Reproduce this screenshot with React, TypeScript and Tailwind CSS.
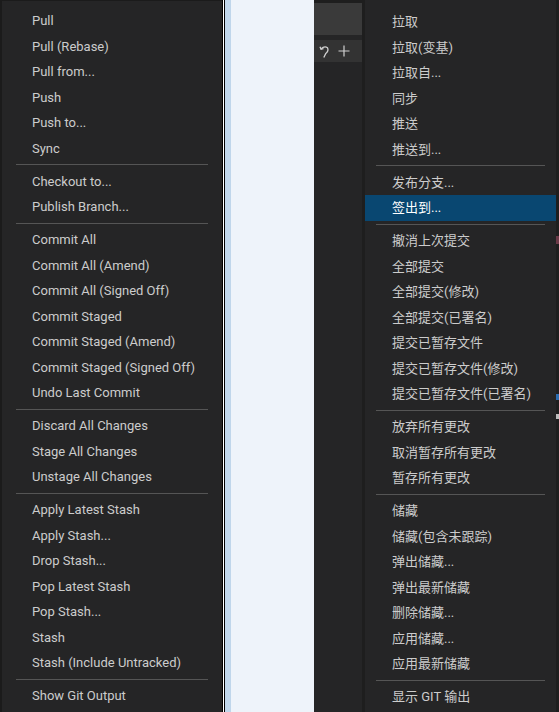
import React from 'react';

type Entry = { label: string; active?: boolean } | 'sep';

const leftItems: Entry[] = [
  { label: 'Pull' },
  { label: 'Pull (Rebase)' },
  { label: 'Pull from...' },
  { label: 'Push' },
  { label: 'Push to...' },
  { label: 'Sync' },
  'sep',
  { label: 'Checkout to...' },
  { label: 'Publish Branch...' },
  'sep',
  { label: 'Commit All' },
  { label: 'Commit All (Amend)' },
  { label: 'Commit All (Signed Off)' },
  { label: 'Commit Staged' },
  { label: 'Commit Staged (Amend)' },
  { label: 'Commit Staged (Signed Off)' },
  { label: 'Undo Last Commit' },
  'sep',
  { label: 'Discard All Changes' },
  { label: 'Stage All Changes' },
  { label: 'Unstage All Changes' },
  'sep',
  { label: 'Apply Latest Stash' },
  { label: 'Apply Stash...' },
  { label: 'Drop Stash...' },
  { label: 'Pop Latest Stash' },
  { label: 'Pop Stash...' },
  { label: 'Stash' },
  { label: 'Stash (Include Untracked)' },
  'sep',
  { label: 'Show Git Output' },
];

const rightItems: Entry[] = [
  { label: '拉取' },
  { label: '拉取(变基)' },
  { label: '拉取自...' },
  { label: '同步' },
  { label: '推送' },
  { label: '推送到...' },
  'sep',
  { label: '发布分支...' },
  { label: '签出到...', active: true },
  'sep',
  { label: '撤消上次提交' },
  { label: '全部提交' },
  { label: '全部提交(修改)' },
  { label: '全部提交(已署名)' },
  { label: '提交已暂存文件' },
  { label: '提交已暂存文件(修改)' },
  { label: '提交已暂存文件(已署名)' },
  'sep',
  { label: '放弃所有更改' },
  { label: '取消暂存所有更改' },
  { label: '暂存所有更改' },
  'sep',
  { label: '储藏' },
  { label: '储藏(包含未跟踪)' },
  { label: '弹出储藏...' },
  { label: '弹出最新储藏' },
  { label: '删除储藏...' },
  { label: '应用储藏...' },
  { label: '应用最新储藏' },
  'sep',
  { label: '显示 GIT 输出' },
];

const Menu: React.FC<{ items: Entry[]; textPad: string; sepPad: string }> = ({ items, textPad, sepPad }) => (
  <div className="flex flex-col">
    {items.map((item, i) =>
      item === 'sep' ? (
        <div key={i} className={`h-[7.5px] flex items-center ${sepPad}`}>
          <div className="h-px w-full bg-[#555555]" />
        </div>
      ) : (
        <div
          key={i}
          className={`h-[25.5px] flex items-center whitespace-nowrap ${textPad} ${
            item.active ? 'bg-[#094771] text-white' : 'text-[#cccccc]'
          }`}
        >
          {item.label}
        </div>
      )
    )}
  </div>
);

export default function App() {
  return (
    <div className="flex h-[712px] w-[559px] overflow-hidden text-[13px] font-['Roboto','Noto_Sans_CJK_SC',sans-serif]">
      {/* english menu */}
      <div className="w-[222px] flex bg-[#252526] border-t border-[#1b1b1b]">
        <div className="w-[2px] bg-[#1b1b1b]" />
        <div className="flex-1 pt-[7px]">
          <Menu items={leftItems} textPad="pl-[30px]" sepPad="pl-[14px] pr-[14px]" />
        </div>
      </div>
      <div className="w-px bg-black" />
      <div className="w-px bg-white" />
      <div className="w-px bg-black" />
      <div className="w-[6px] bg-[#c0d6eb]" />
      <div className="w-[83px] bg-[#eef3fa]" />

      {/* editor side */}
      <div className="w-[48px] flex flex-col bg-[#252526]">
        <div className="h-[3px] bg-[#1e1e1e]" />
        <div className="h-[32px] bg-[#3a3a3a]" />
        <div className="h-[5px]" />
        <div className="h-[22px] bg-[#333333] flex items-center gap-[8px] pl-[5px]">
          <svg width="11" height="15" viewBox="0 0 11 15" fill="none" stroke="#d0d0d0" strokeWidth="1.3">
            <path d="M2 5 Q5.5 1.5 8.5 3.8 Q10 7 6.8 9.5 L4.8 13.5" />
            <path d="M1 2.8 L2 5.3 L4.5 4.6" />
          </svg>
          <svg width="12" height="12" viewBox="0 0 12 12" stroke="#d0d0d0" strokeWidth="1.2">
            <path d="M6 0.5 V11.5 M0.5 6 H11.5" />
          </svg>
        </div>
      </div>
      <div className="w-[3px] bg-[#1e1e1e]" />

      {/* chinese menu */}
      <div className="w-[191px] bg-[#252526] pt-[9px]">
        <Menu items={rightItems} textPad="pl-[27px]" sepPad="pl-[11px] pr-[11px]" />
      </div>
      <div className="w-[3px] bg-[#1e1e1e] flex flex-col">
        <div className="h-[236px]" />
        <div className="h-[8px] bg-[#6b3a48]" />
        <div className="h-[150px]" />
        <div className="h-[6px] bg-[#2b6cb0]" />
        <div className="h-[14px]" />
        <div className="h-[5px] bg-[#bbbbbb]" />
      </div>
    </div>
  );
}
